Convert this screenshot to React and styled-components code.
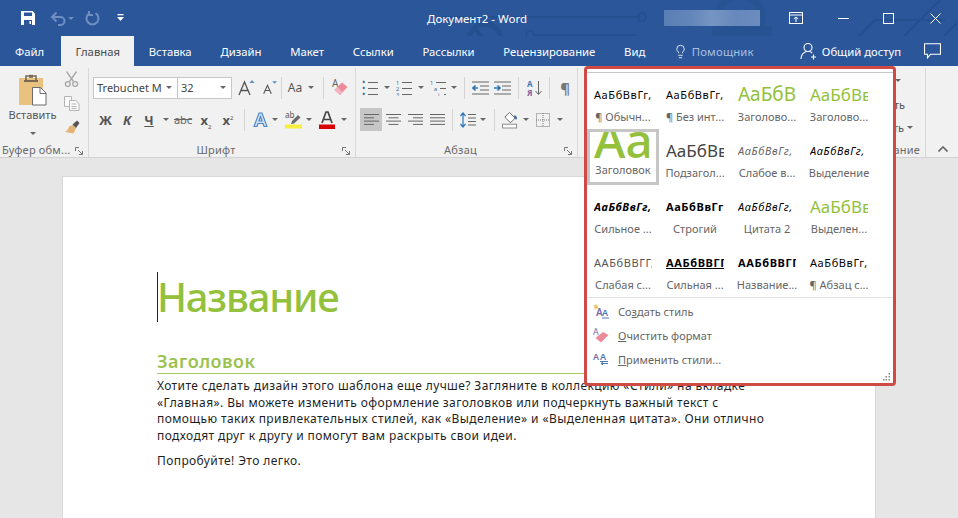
import React from "react";
import styled, { createGlobalStyle } from "styled-components";
import { Lightbulb } from "lucide-react";

const UI_FONT = `"Noto Sans", "Open Sans", sans-serif`;
const GREEN = "#93c13c";

const styleRows = [
  [
    { text: "АаБбВвГг,", size: 11, label: "¶ Обычн..." },
    { text: "АаБбВвГг,", size: 11, label: "¶ Без инт..." },
    { text: "АаБбВ", size: 19, color: GREEN, label: "Заголово..." },
    { text: "АаБбВв", size: 17, color: GREEN, label: "Заголово..." },
  ],
  [
    { text: "АаБ", size: 48, color: GREEN, label: "Заголовок", active: true, top: -8 },
    { text: "АаБбВв", size: 17, color: "#444", label: "Подзагол..." },
    { text: "АаБбВвГг,", size: 11, italic: true, color: "#666", label: "Слабое в..." },
    { text: "АаБбВвГг,", size: 11, italic: true, label: "Выделение" },
  ],
  [
    { text: "АаБбВвГг,", size: 11, italic: true, bold: true, label: "Сильное ..." },
    { text: "АаБбВвГг", size: 11, bold: true, label: "Строгий" },
    { text: "АаБбВвГг,", size: 11, italic: true, label: "Цитата 2" },
    { text: "АаБбВв", size: 17, color: GREEN, label: "Выделен..." },
  ],
  [
    { text: "ААБбВВГГ,", size: 11, color: "#555", label: "Слабая с..." },
    { text: "ААБбВВГГ", size: 11, bold: true, under: true, label: "Сильная ..." },
    { text: "ААБбВВГГ", size: 11, bold: true, label: "Название..." },
    { text: "АаБбВвГг,", size: 11, label: "¶ Абзац с..." },
  ],
];

const GlobalStyle = createGlobalStyle`
  html, body {
    margin: 0;
    height: 100%;
    overflow: hidden;
    background: #e6e6e6;
    font-family: ${UI_FONT};
  }
`;

const App = () => (
  <>
    <GlobalStyle />
    <Window>
      <TitleBar>
        <Circuit viewBox="0 0 958 66">
          <g fill="none" stroke="#25508f" strokeWidth="2">
            <path d="M440 17h200" />
            <circle cx="642" cy="17" r="4" />
            <path d="M535 35h100l30 20" />
            <circle cx="530" cy="35" r="4" />
            <path d="M845 50l30-30h70M880 60l60-60M920 60l38-38" />
            <circle cx="485" cy="40" r="16" strokeWidth="5" />
            <path d="M476 30l18 20" strokeWidth="4" />
          </g>
          <path d="M712 26h60v30h-60z" fill="#285392" />
          <circle cx="740" cy="18" r="22" fill="none" stroke="#285392" strokeWidth="7" />
        </Circuit>
        <QuickAccess>
          <SaveIcon />
          <UndoIcon />
          <TinyCaret $color="#6f8fc0" />
          <RedoIcon />
          <CustomizeIcon />
        </QuickAccess>
        <DocTitle>Документ2 - Word</DocTitle>
        <BlurBlock />
        <WindowButtons>
          <RibbonModeIcon />
          <MinimizeIcon />
          <MaximizeIcon />
          <CloseIcon />
        </WindowButtons>
      </TitleBar>

      <TabBar>
        <Tab>Файл</Tab>
        <Tab $active>Главная</Tab>
        <Tab>Вставка</Tab>
        <Tab>Дизайн</Tab>
        <Tab>Макет</Tab>
        <Tab>Ссылки</Tab>
        <Tab>Рассылки</Tab>
        <Tab>Рецензирование</Tab>
        <Tab>Вид</Tab>
        <HelpTab>
          <Lightbulb size={15} strokeWidth={1.3} color="#fff" />
          <span>Помощник</span>
        </HelpTab>
        <ShareTab>
          <ShareIcon />
          <span>Общий доступ</span>
        </ShareTab>
        <CommentIcon />
      </TabBar>

      <Ribbon>
        <Group $width={89}>
          <ClipboardBody>
            <PasteButton>
              <PasteIcon />
              <span>Вставить</span>
              <TinyCaret />
            </PasteButton>
            <ClipboardTools>
              <CutIcon />
              <CopyIcon />
              <BrushIcon />
            </ClipboardTools>
          </ClipboardBody>
          <GroupLabel $align="left">
            Буфер обм...
            <Launcher />
          </GroupLabel>
        </Group>

        <Group $width={267}>
          <ToolRow $left={4}>
            <FontBox $width={85}>
              Trebuchet M
              <TinyCaret />
            </FontBox>
            <FontBox $width={55} $joined>
              32
              <TinyCaret />
            </FontBox>
            <Tool $w={30}><GrowIcon up /></Tool>
            <Tool $w={16}><GrowIcon /></Tool>
            <Sep $space={3} />
            <Tool $w={20}><CaseText>Aa</CaseText></Tool>
            <Tool $w={12}><TinyCaret /></Tool>
            <Sep $space={6} />
            <Tool $w={20}><EraserIcon /></Tool>
          </ToolRow>
          <ToolRow $left={6}>
            <Tool $w={21}><FormatText $bold>Ж</FormatText></Tool>
            <Tool $w={22}><FormatText $bold $italic>К</FormatText></Tool>
            <Tool $w={22}><FormatText $bold $under>Ч</FormatText></Tool>
            <Tool $w={11}><TinyCaret /></Tool>
            <Tool $w={24}><StrikeText>abc</StrikeText></Tool>
            <Tool $w={22}><ScriptText>x<sub>2</sub></ScriptText></Tool>
            <Tool $w={22}><ScriptText>x<sup>2</sup></ScriptText></Tool>
            <Sep $space={5} />
            <Tool $w={20}><TextEffectIcon /></Tool>
            <Tool $w={10}><TinyCaret /></Tool>
            <Tool $w={26}><HighlightIcon /></Tool>
            <Tool $w={6}><TinyCaret /></Tool>
            <Tool $w={30}><FontColorIcon /></Tool>
            <Tool $w={4}><TinyCaret /></Tool>
          </ToolRow>
          <GroupLabel>
            Шрифт
            <Launcher />
          </GroupLabel>
        </Group>

        <Group $width={222}>
          <ToolRow $left={3}>
            <Tool $w={21}><ListIcon kind="bullet" /></Tool>
            <Tool $w={13}><TinyCaret /></Tool>
            <Tool $w={21}><ListIcon kind="number" /></Tool>
            <Tool $w={13}><TinyCaret /></Tool>
            <Tool $w={22}><ListIcon kind="multi" /></Tool>
            <Tool $w={10}><TinyCaret /></Tool>
            <Sep $space={5} />
            <Tool $w={21}><IndentIcon /></Tool>
            <Tool $w={23}><IndentIcon right /></Tool>
            <Sep $space={4} />
            <Tool $w={23}><SortIcon /></Tool>
            <Sep $space={3} />
            <Tool $w={24}><PilcrowText>¶</PilcrowText></Tool>
          </ToolRow>
          <ToolRow $left={4}>
            <Tool $w={22} $pressed><AlignIcon kind="left" /></Tool>
            <Tool $w={22}><AlignIcon kind="center" /></Tool>
            <Tool $w={22}><AlignIcon kind="right" /></Tool>
            <Tool $w={22}><AlignIcon kind="justify" /></Tool>
            <Sep $space={4} />
            <Tool $w={22}><SpacingIcon /></Tool>
            <Tool $w={8}><TinyCaret /></Tool>
            <Sep $space={7} />
            <Tool $w={16}><ShadingIcon /></Tool>
            <Tool $w={16}><TinyCaret /></Tool>
            <Tool $w={18}><BordersIcon /></Tool>
            <Tool $w={16}><TinyCaret /></Tool>
          </ToolRow>
          <GroupLabel>
            Абзац
            <Launcher />
          </GroupLabel>
        </Group>

        <Group $width={348}>
          <EditRow $top={3} $right={24}>
            Найти
            <TinyCaret />
          </EditRow>
          <EditRow $top={27} $right={20}>Заменить</EditRow>
          <EditRow $top={50} $right={12}>
            Выделить
            <TinyCaret />
          </EditRow>
          <GroupLabel $align="right">Редактирование</GroupLabel>
        </Group>
        <CollapseArea>
          <CollapseIcon />
        </CollapseArea>
      </Ribbon>

      <Canvas>
        <Page>
          <Heading1>Название</Heading1>
          <Heading2>Заголовок</Heading2>
          <Paragraph>
            Хотите сделать дизайн этого шаблона еще лучше? Загляните в коллекцию «Стили» на вкладке
            <br />
            «Главная». Вы можете изменить оформление заголовков или подчеркнуть важный текст с
            <br />
            помощью таких привлекательных стилей, как «Выделение» и «Выделенная цитата». Они отлично
            <br />
            подходят друг к другу и помогут вам раскрыть свои идеи.
          </Paragraph>
          <Paragraph>Попробуйте! Это легко.</Paragraph>
        </Page>
      </Canvas>

      <StylesPopup>
        <StyleGrid>
          {styleRows.flat().map((item, i) => (
            <StyleCell key={i} $active={item.active}>
              <Preview
                $size={item.size}
                $color={item.color}
                $italic={item.italic}
                $bold={item.bold}
                $under={item.under}
                $top={item.top}
              >
                <span>{item.text}</span>
              </Preview>
              <StyleLabel>{item.label}</StyleLabel>
            </StyleCell>
          ))}
        </StyleGrid>
        <PopupMenu>
          <MenuRow>
            <MenuIcon kind="create" />
            <span>
              Со<u>з</u>дать стиль
            </span>
          </MenuRow>
          <MenuRow>
            <MenuIcon kind="clear" />
            <span>
              <u>О</u>чистить формат
            </span>
          </MenuRow>
          <MenuRow>
            <MenuIcon kind="apply" />
            <span>
              <u>П</u>рименить стили...
            </span>
          </MenuRow>
        </PopupMenu>
        <Grip viewBox="0 0 8 8">
          <g fill="#8a8a8a">
            <rect x="5.5" y="0" width="1.5" height="1.5" />
            <rect x="2.5" y="3" width="1.5" height="1.5" />
            <rect x="5.5" y="3" width="1.5" height="1.5" />
            <rect x="0" y="6" width="1.5" height="1.5" />
            <rect x="2.5" y="6" width="1.5" height="1.5" />
            <rect x="5.5" y="6" width="1.5" height="1.5" />
          </g>
        </Grip>
      </StylesPopup>
    </Window>
  </>
);

export default App;

/* icons */

const SaveIcon = () => (
  <svg width="16" height="16" viewBox="0 0 16 16">
    <path d="M1 1h11.5L15 3.5V15H1z" fill="#fff" />
    <path d="M4 2.5h8v3.5H4z" fill="#2b579a" />
    <path d="M4 10h8v5H4z" fill="#2b579a" />
    <path d="M9.5 11h1.5v3H9.5z" fill="#fff" />
  </svg>
);

const UndoIcon = () => (
  <svg width="17" height="16" viewBox="0 0 17 16" fill="none" stroke="#6f8fc0" strokeWidth="2">
    <path d="M2 7h8.5a4 4 0 0 1 0 8H8" />
    <path d="M6.5 2.5L2 7l4.5 4.5" />
  </svg>
);

const RedoIcon = () => (
  <svg width="15" height="16" viewBox="0 0 15 16" fill="none" stroke="#6f8fc0" strokeWidth="2">
    <path d="M10.5 3.2a6 6 0 1 1-6.5.3" />
    <path d="M4 1v4h4" />
  </svg>
);

const CustomizeIcon = () => (
  <svg width="7" height="8" viewBox="0 0 7 8" fill="#fff">
    <rect x="0.5" y="0" width="6" height="1.3" />
    <path d="M0 3h7L3.5 7z" />
  </svg>
);

const RibbonModeIcon = () => (
  <svg width="14" height="12" viewBox="0 0 14 12" fill="none" stroke="#fff">
    <rect x="0.5" y="0.5" width="13" height="11" />
    <path d="M0.5 3h13" />
    <path d="M7 10V5M4.8 7L7 5l2.2 2" />
  </svg>
);

const MinimizeIcon = () => (
  <svg width="11" height="11" viewBox="0 0 11 11" stroke="#fff">
    <path d="M0 5.5h11" />
  </svg>
);

const MaximizeIcon = () => (
  <svg width="11" height="11" viewBox="0 0 11 11" fill="none" stroke="#fff">
    <rect x="0.5" y="0.5" width="10" height="10" />
  </svg>
);

const CloseIcon = () => (
  <svg width="11" height="11" viewBox="0 0 11 11" stroke="#fff">
    <path d="M0.5 0.5l10 10M10.5 0.5l-10 10" />
  </svg>
);

const ShareIcon = () => (
  <svg width="18" height="18" viewBox="0 0 18 18" fill="none" stroke="#fff" strokeWidth="1.1">
    <circle cx="8" cy="5.5" r="4" />
    <path d="M1 17c0-4 2.5-6.5 5.5-7.5M9.5 9.5c1 .3 2 .8 2.7 1.5" />
    <path d="M13.5 12.5v5M11 15h5" />
  </svg>
);

const CommentIcon = () => (
  <CommentSvg width="17" height="16" viewBox="0 0 17 16" fill="none" stroke="#fff" strokeWidth="1.1">
    <path d="M0.5 0.8h16v10.5H6.5l-3 3.5v-3.5h-3z" />
  </CommentSvg>
);

const PasteIcon = () => (
  <svg width="30" height="32" viewBox="0 0 30 32">
    <path d="M1 4h24v27H1z" fill="#e8c27e" />
    <path d="M8 2h10v5H8z" fill="none" stroke="#7a6a55" strokeWidth="1.6" />
    <path d="M11 0.8h4v3h-4z" fill="#7a6a55" />
    <path d="M6 6h14v2H6z" fill="#7a6a55" />
    <path d="M14.5 13.5h8l5.5 5.5v12H14.5z" fill="#fff" stroke="#6b6b6b" />
    <path d="M22 13.5v6h6" fill="none" stroke="#6b6b6b" />
  </svg>
);

const CutIcon = () => (
  <svg width="15" height="16" viewBox="0 0 15 16" fill="none" stroke="#a9a9a9" strokeWidth="1.4">
    <path d="M2.5 0.5l7 10M12.5 0.5l-7 10" />
    <circle cx="3.8" cy="13" r="2.4" />
    <circle cx="11.2" cy="13" r="2.4" />
  </svg>
);

const CopyIcon = () => (
  <svg width="16" height="15" viewBox="0 0 16 15" fill="#fafafa" stroke="#b5b5b5">
    <path d="M0.5 0.5h7v10h-7z" />
    <path d="M5.5 4.5h6l3.5 3v7h-9.5z" />
    <path d="M7.5 8h5M7.5 10.5h5M7.5 12.5h5" />
  </svg>
);

const BrushIcon = () => (
  <svg width="16" height="15" viewBox="0 0 16 15">
    <path d="M9 5l3 3-2.5 5.5L1 12c2-1 3.5-3 4-5.5z" fill="#e5b577" />
    <path d="M8.5 4.5L13 0.5 15.5 3l-3.5 5z" fill="#555" />
  </svg>
);

const GrowIcon = ({ up }) => (
  <svg width="19" height="17" viewBox="0 0 19 17" fill="none">
    <path
      d={up ? "M1 16L6.5 3 12 16M3 11.5h7" : "M2 16l4.5-10L11 16M3.8 12h5.4"}
      stroke="#555"
      strokeWidth="1.3"
    />
    <path d={up ? "M11.5 4l2.5-3 2.5 3z" : "M12 1h6l-3 3z"} fill="#5a8fc4" />
  </svg>
);

const EraserIcon = () => (
  <svg width="16" height="17" viewBox="0 0 16 17">
    <text x="0" y="8" fontSize="10" fontFamily={UI_FONT} fill="#666">
      A
    </text>
    <path d="M2.5 11L10 3.5 15.5 8 8 16z" fill="#ed8a9a" />
    <path d="M2.5 11L5.5 8l5 5L8 16z" fill="#f3b3bd" />
  </svg>
);

const TextEffectIcon = () => (
  <svg width="15" height="15" viewBox="0 0 15 15">
    <path d="M1 14.5L6 1h3l5 13.5H11l-1-3H5l-1 3zM6 9h3L7.5 4.5z" fill="#cfe0f2" stroke="#4a86c5" strokeWidth="1.1" />
  </svg>
);

const HighlightIcon = () => (
  <svg width="17" height="18" viewBox="0 0 17 18">
    <text x="0" y="7" fontSize="8" fontFamily={UI_FONT} fill="#555">
      ab
    </text>
    <path d="M7 10l6-6 2.5 2.5L9 12.5 6 13z" fill="#6b6b6b" />
    <rect x="0" y="13.5" width="17" height="4" fill="#f5f040" />
  </svg>
);

const FontColorIcon = () => (
  <svg width="16" height="18" viewBox="0 0 16 18">
    <path d="M3 12L7 1h2l4 11M4.5 8.5h7" fill="none" stroke="#444" strokeWidth="1.7" />
    <rect x="0" y="13.5" width="16" height="4.5" fill="#d90000" />
  </svg>
);

const ListIcon = ({ kind }) => {
  const marks =
    kind === "bullet" ? ["•", "•", "•"] : kind === "number" ? ["1", "2", "3"] : ["1", "a", "i"];
  const xs = kind === "multi" ? [0, 4, 8] : [0, 0, 0];
  return (
    <svg width="16" height="16" viewBox="0 0 16 16">
      {marks.map((mark, i) => (
        <g key={i}>
          <text
            x={xs[i]}
            y={4.5 + i * 6}
            fontSize={kind === "bullet" ? 9 : 5.5}
            fontFamily={UI_FONT}
            fill="#3d6796"
          >
            {mark}
          </text>
          <path d={`M${xs[i] + 6} ${2.5 + i * 6}H16`} stroke="#666" />
        </g>
      ))}
    </svg>
  );
};

const IndentIcon = ({ right }) => (
  <svg width="17" height="14" viewBox="0 0 17 14" fill="none">
    <path d="M0 1h17M8 5h9M8 9h9M0 13h17" stroke="#666" />
    {right ? (
      <path d="M0 7h5M3.5 4.5L6 7 3.5 9.5" stroke="#2e75b6" strokeWidth="1.6" />
    ) : (
      <path d="M6 7H1M3.5 4.5L1 7l2.5 2.5" stroke="#2e75b6" strokeWidth="1.6" />
    )}
  </svg>
);

const SortIcon = () => (
  <svg width="15" height="16" viewBox="0 0 15 16">
    <text x="0" y="7" fontSize="8" fontWeight="700" fontFamily={UI_FONT} fill="#3f7ab6">
      А
    </text>
    <text x="0" y="15.5" fontSize="8" fontWeight="700" fontFamily={UI_FONT} fill="#8064a2">
      Я
    </text>
    <path d="M11.5 1v13M8.5 11l3 3.5 3-3.5" fill="none" stroke="#666" />
  </svg>
);

const AlignIcon = ({ kind }) => {
  const widths = [15, 10, 15, 10];
  return (
    <svg width="15" height="11" viewBox="0 0 15 11" stroke="#666">
      {widths.map((w, i) => {
        const len = kind === "justify" ? 15 : w;
        const x = kind === "center" ? (15 - len) / 2 : kind === "right" ? 15 - len : 0;
        return <path key={i} d={`M${x} ${0.5 + i * 3.3}h${len}`} />;
      })}
    </svg>
  );
};

const SpacingIcon = () => (
  <svg width="16" height="16" viewBox="0 0 16 16" fill="none">
    <path d="M3 1v14M0.5 4L3 1l2.5 3M0.5 12L3 15l2.5-3" stroke="#2e75b6" strokeWidth="1.2" />
    <path d="M8 2.5h8M8 6h8M8 9.5h8M8 13h8" stroke="#666" />
  </svg>
);

const ShadingIcon = () => (
  <svg width="17" height="18" viewBox="0 0 17 18">
    <path d="M3 6l5-5 6 6-5 5z" fill="#fff" stroke="#666" />
    <path d="M13 4c2 0 3 2 3 4-1 1-2.5 0-3-1z" fill="#3e6b9f" />
    <rect x="0.5" y="13.5" width="15" height="4" fill="#fff" stroke="#888" />
  </svg>
);

const BordersIcon = () => (
  <svg width="14" height="14" viewBox="0 0 14 14" fill="none">
    <rect x="0.5" y="0.5" width="13" height="13" stroke="#777" strokeDasharray="1 1" />
    <path d="M7 0v14M0 7h14" stroke="#777" strokeDasharray="1 1" />
  </svg>
);

const CollapseIcon = () => (
  <svg width="10" height="6" viewBox="0 0 10 6" fill="none" stroke="#666" strokeWidth="1.6">
    <path d="M0.5 5.5L5 1l4.5 4.5" />
  </svg>
);

const MenuIcon = ({ kind }) => (
  <svg width="16" height="16" viewBox="0 0 16 16">
    {kind === "create" && (
      <>
        <path d="M3 0.5l.8 2 2-.3-1.3 1.7 1.3 1.7-2-.3-.8 2-.8-2-2 .3L1.5 3.9.2 2.2l2 .3z" fill="#e9c56b" />
        <text x="3" y="13" fontSize="10" fontWeight="600" fontFamily={UI_FONT} fill="#7a6aa8">A</text>
        <text x="9" y="13" fontSize="9" fontWeight="600" fontFamily={UI_FONT} fill="#4a7ab5">A</text>
        <path d="M9 15h7" stroke="#4a7ab5" />
      </>
    )}
    {kind === "clear" && (
      <>
        <text x="0" y="8" fontSize="9" fontFamily={UI_FONT} fill="#7a6aa8">A</text>
        <path d="M2.5 11L10 5l5.5 3L8 15.5z" fill="#ed8a9a" />
      </>
    )}
    {kind === "apply" && (
      <>
        <text x="0" y="9" fontSize="9" fontWeight="600" fontFamily={UI_FONT} fill="#7a6aa8">A</text>
        <text x="7" y="9" fontSize="9" fontWeight="600" fontFamily={UI_FONT} fill="#4a7ab5">A</text>
        <path d="M7 10.5h8M15 12.5H8l2-1.5M8 12.5l2 1.5" fill="none" stroke="#4a7ab5" />
      </>
    )}
  </svg>
);

const Launcher = () => (
  <LauncherSvg width="8" height="8" viewBox="0 0 8 8" fill="none" stroke="#777">
    <path d="M0.5 4V0.5H4M3 3l4 4M4 7.5h3.5V4" />
  </LauncherSvg>
);

/* layout */

const Window = styled.div`
  width: 958px;
  height: 518px;
  position: relative;
  overflow: hidden;
  display: flex;
  flex-direction: column;
`;

const TitleBar = styled.header`
  height: 36px;
  background: #2b579a;
  display: flex;
  align-items: center;
  position: relative;
  color: #fff;
`;

const Circuit = styled.svg`
  position: absolute;
  left: 0;
  top: 0;
  width: 958px;
  height: 66px;
  z-index: 0;
`;

const QuickAccess = styled.div`
  position: relative;
  width: 427px;
  padding-left: 20px;
  box-sizing: border-box;
  display: flex;
  align-items: center;

  > :nth-child(2) {
    margin-left: 14px;
  }
  > :nth-child(3) {
    margin-left: 1px;
  }
  > :nth-child(4) {
    margin-left: 11px;
  }
  > :nth-child(5) {
    margin-left: 17px;
  }
`;

const DocTitle = styled.div`
  position: relative;
  width: 237px;
  font-size: 11.5px;
`;

const BlurBlock = styled.div`
  position: relative;
  width: 96px;
  height: 16px;
  background: linear-gradient(90deg, #5a7fb4 0%, #6487ba 30%, #7695c3 50%, #6788bb 75%, #6b8cbd 100%);
`;

const WindowButtons = styled.div`
  position: relative;
  margin-left: 29px;
  display: flex;
  align-items: center;
  gap: 34.5px;

  svg:nth-child(4) {
    margin-left: 1.5px;
  }
`;

const TabBar = styled.nav`
  height: 30px;
  background: #2b579a;
  display: flex;
  align-items: stretch;
  position: relative;
`;

const Tab = styled.div`
  position: relative;
  padding: 0 14.4px;
  display: flex;
  align-items: center;
  font-size: 11.3px;
  color: ${(p) => (p.$active ? "#4a4a4a" : "#fff")};
  background: ${(p) => (p.$active ? "#f1f1f1" : "transparent")};

  &:first-child {
    padding: 0 17px 0 15px;
  }
`;

const HelpTab = styled.div`
  position: relative;
  margin-left: 13px;
  display: flex;
  align-items: center;
  gap: 4px;
  font-size: 11.3px;
  letter-spacing: 0.2px;
  color: #a9bfe0;
`;

const ShareTab = styled.div`
  position: relative;
  margin-left: 46px;
  display: flex;
  align-items: center;
  gap: 4px;
  font-size: 11.3px;
  color: #fff;
`;

const CommentSvg = styled.svg`
  position: relative;
  align-self: center;
  margin-left: 23px;
`;

const Ribbon = styled.section`
  height: 91px;
  background: #f1f1f1;
  border-bottom: 1px solid #d2d2d2;
  display: flex;
`;

const Group = styled.div`
  width: ${(p) => p.$width}px;
  flex: none;
  box-sizing: border-box;
  border-right: 1px solid #d9d9d9;
  margin: 2px 0 0;
  display: flex;
  flex-direction: column;
  position: relative;
`;

const ClipboardBody = styled.div`
  display: flex;
  height: 74px;
`;

const PasteButton = styled.div`
  width: 64px;
  padding-left: 1px;
  display: flex;
  flex-direction: column;
  align-items: center;
  padding-top: 6px;
  box-sizing: border-box;
  font-size: 11px;
  color: #555;

  span {
    margin-top: 1px;
    line-height: 16px;
  }

  span + span {
    margin-top: 9px;
  }
`;

const ClipboardTools = styled.div`
  display: flex;
  flex-direction: column;
  gap: 9px;
  padding-top: 3px;
`;

const GroupLabel = styled.div`
  margin-top: auto;
  height: 15px;
  line-height: 15px;
  font-size: 11px;
  letter-spacing: 0.2px;
  color: #6a6a6a;
  padding: 0 ${(p) => (p.$align ? 5 : 12)}px 0 ${(p) => (p.$align === "left" ? 2 : 0)}px;
  text-align: ${(p) => p.$align || "center"};
  white-space: nowrap;
  position: relative;
`;

const LauncherSvg = styled.svg`
  position: absolute;
  right: 5px;
  top: 5px;
`;

const ToolRow = styled.div`
  display: flex;
  align-items: center;
  height: 23px;
  margin-top: 8px;
  padding-left: ${(p) => p.$left || 0}px;

  & + & {
    margin-top: 9px;
  }
`;

const Tool = styled.div`
  width: ${(p) => p.$w}px;
  height: 23px;
  flex: none;
  display: flex;
  align-items: center;
  justify-content: center;
  background: ${(p) => (p.$pressed ? "#c6c6c6" : "transparent")};
`;

const Sep = styled.div`
  width: 1px;
  height: 22px;
  flex: none;
  background: #d4d4d4;
  margin: 0 ${(p) => p.$space || 4}px;
`;

const FontBox = styled.div`
  width: ${(p) => p.$width}px;
  height: 22px;
  flex: none;
  box-sizing: border-box;
  background: #fff;
  border: 1px solid #c6c6c6;
  margin-left: ${(p) => (p.$joined ? -1 : 0)}px;
  padding: 0 5px 0 3px;
  display: flex;
  align-items: center;
  justify-content: space-between;
  font-size: 11px;
  color: #444;
`;

const TinyCaret = styled.span`
  flex: none;
  display: inline-block;
  width: 0;
  height: 0;
  border-left: 3px solid transparent;
  border-right: 3px solid transparent;
  border-top: 3px solid ${(p) => p.$color || "#666"};
`;

const CaseText = styled.span`
  font-size: 12px;
  color: #555;
`;

const FormatText = styled.span`
  font-size: 13px;
  color: #555;
  font-weight: ${(p) => (p.$bold ? 700 : 400)};
  font-style: ${(p) => (p.$italic ? "italic" : "normal")};
  text-decoration: ${(p) => (p.$under ? "underline" : "none")};
`;

const StrikeText = styled.span`
  font-size: 11px;
  color: #666;
  text-decoration: line-through;
`;

const ScriptText = styled.span`
  font-size: 13px;
  font-weight: 700;
  color: #555;
  line-height: 16px;

  sub,
  sup {
    font-size: 6px;
    font-weight: 400;
    line-height: 0;
  }
`;

const PilcrowText = styled.span`
  font-size: 15px;
  font-weight: 700;
  color: #777;
`;

const EditRow = styled.div`
  position: absolute;
  top: ${(p) => p.$top}px;
  right: ${(p) => p.$right}px;
  height: 18px;
  display: flex;
  align-items: center;
  gap: 3px;
  font-size: 11px;
  color: #555;
`;

const CollapseArea = styled.div`
  flex: 1;
  display: flex;
  align-items: flex-end;
  padding: 0 0 5px 12px;
`;

const Canvas = styled.main`
  flex: 1;
  padding: 18px 82px 0 62px;
  background: #e6e6e6;
  min-height: 0;
`;

const Page = styled.article`
  background: #fff;
  height: 100%;
  box-sizing: border-box;
  padding: 95px 96px 0 94px;
  border: 1px solid #d8d8d8;
  border-bottom: none;
  color: #222;
  font-family: "Noto Sans", sans-serif;
  position: relative;
`;

const Heading1 = styled.h1`
  margin: 0;
  font-size: 40px;
  letter-spacing: -1.2px;
  line-height: 50px;
  font-weight: 500;
  color: ${GREEN};
  border-left: 1px solid #222;
  height: 50px;
  text-indent: -1px;
`;

const Heading2 = styled.h2`
  margin: 28px 0 0;
  font-size: 18px;
  letter-spacing: 0.5px;
  line-height: 23px;
  font-weight: 600;
  color: #9bc24f;
  border-bottom: 1px solid #a9c95f;
`;

const Paragraph = styled.p`
  margin: 4px 0 9px;
  font-size: 12px;
  letter-spacing: 0.4px;
  line-height: 16.6px;
  color: #1f1f1f;
  white-space: nowrap;
`;

const StylesPopup = styled.aside`
  position: absolute;
  left: 584px;
  top: 66px;
  width: 312px;
  height: 320px;
  box-sizing: border-box;
  background: #fff;
  border: 3px solid #cf4a44;
  border-radius: 4px;
  z-index: 5;
  overflow: hidden;

  &::before {
    content: "";
    display: block;
    height: 1px;
    background: #c8c8c8;
    margin: 3px 0 0;
  }
`;

const StyleGrid = styled.div`
  display: grid;
  grid-template-columns: repeat(4, 72px);
  grid-auto-rows: 56px;
`;

const StyleCell = styled.div`
  box-sizing: border-box;
  display: flex;
  flex-direction: column;
  align-items: center;
  padding-top: ${(p) => (p.$active ? 0 : 3)}px;
  border: 3px solid ${(p) => (p.$active ? "#c6c6c6" : "transparent")};
  overflow: hidden;
`;

const Preview = styled.div`
  width: 58px;
  height: 30px;
  flex: none;
  overflow: hidden;
  display: flex;
  align-items: center;
  white-space: nowrap;
  font-size: ${(p) => p.$size}px;
  letter-spacing: ${(p) => (p.$size < 12 ? 0.6 : 0)}px;
  color: ${(p) => p.$color || "#000"};
  font-style: ${(p) => (p.$italic ? "italic" : "normal")};
  font-weight: ${(p) => (p.$bold ? 700 : p.$size > 30 ? 500 : 400)};
  text-decoration: ${(p) => (p.$under ? "underline" : "none")};

  span {
    position: relative;
    top: ${(p) => p.$top || 0}px;
  }
`;

const StyleLabel = styled.div`
  font-size: 11px;
  line-height: 16px;
  color: #666;
  white-space: nowrap;
`;

const PopupMenu = styled.div`
  border-top: 1px solid #e2e2e2;
  padding-top: 1px;
`;

const MenuRow = styled.div`
  height: 24px;
  display: flex;
  align-items: center;
  gap: 9px;
  padding-left: 6px;
  font-size: 11px;
  color: #666;
`;

const Grip = styled.svg`
  position: absolute;
  right: 2px;
  bottom: 2px;
  width: 8px;
  height: 8px;
`;
